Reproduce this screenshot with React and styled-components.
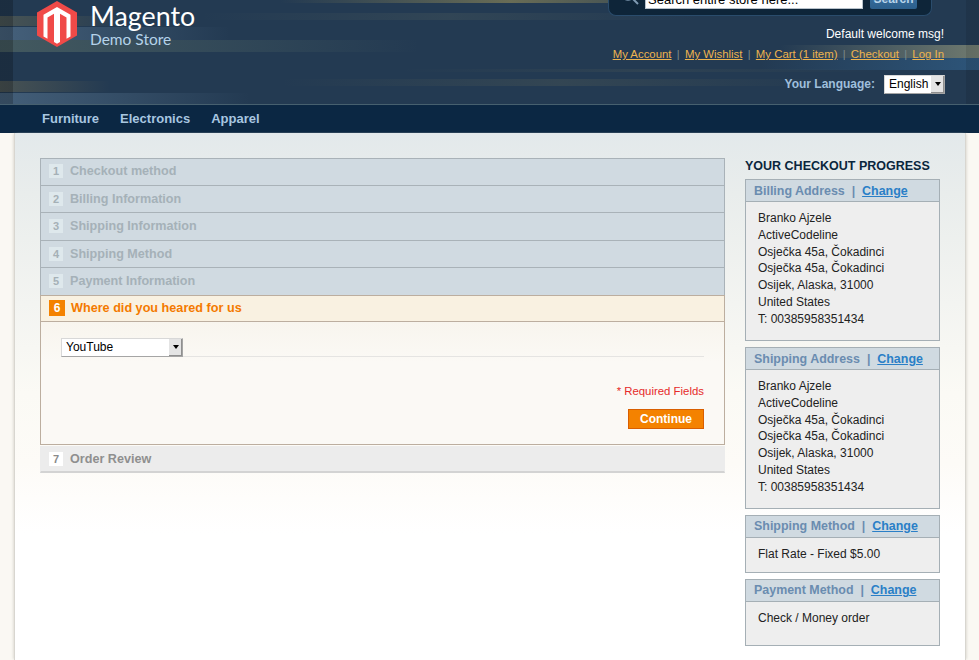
import styled, { createGlobalStyle } from "styled-components";

const GlobalStyle = createGlobalStyle`
  html, body {
    margin: 0;
    padding: 0;
    background: #faf8f3;
    font-family: "Liberation Sans", Arial, sans-serif;
    font-size: 12px;
    color: #222;
    overflow: hidden;
  }
`;

// one streak of the header texture: [colour, x, y, width, height, fade]
const streaks = [
  ["rgba(0,0,0,.22)", 0, 0, 13, 104, "flat"],
  ["rgba(0,0,0,.1)", 966, 0, 13, 104, "flat"],
  ["rgba(160,145,90,.3)", 0, 16, 130, 10, "out"],
  ["rgba(130,165,195,.36)", 0, 27, 230, 13, "out"],
  ["rgba(150,170,130,.28)", 0, 40, 420, 12, "out"],
  ["rgba(160,140,85,.3)", 0, 81, 110, 11, "out"],
  ["rgba(130,165,195,.34)", 0, 93, 250, 11, "out"],
  ["rgba(190,170,90,.45)", 280, 0, 460, 3, "both"],
  ["rgba(150,150,110,.12)", 200, 13, 500, 7, "both"],
  ["rgba(150,140,90,.14)", 280, 79, 560, 7, "both"],
  ["rgba(150,140,90,.1)", 400, 69, 480, 3, "both"],
  ["rgba(175,175,135,.55)", 780, 45, 199, 13, "in"],
  ["rgba(60,125,180,.4)", 760, 58, 219, 12, "in"],
];

const fades = {
  flat: (c) => `linear-gradient(${c}, ${c})`,
  out: (c) => `linear-gradient(to right, ${c}, transparent)`,
  in: (c) => `linear-gradient(to left, ${c}, transparent)`,
  both: (c) => `linear-gradient(to right, transparent, ${c} 50%, transparent)`,
};

const streakLayers = streaks
  .map(([colour, x, y, w, h, fade]) => `${fades[fade](colour)} ${x}px ${y}px / ${w}px ${h}px no-repeat`)
  .join(", ");

const Page = styled.div`
  width: 979px;
  height: 660px;
  overflow: hidden;
`;

const Header = styled.header`
  height: 105px;
  box-sizing: border-box;
  background: ${streakLayers}, #233a52;
  overflow: hidden;
  display: flex;
  justify-content: space-between;
  border-bottom: 1px solid #47606f;
`;

const Brand = styled.div`
  display: flex;
  align-items: flex-start;
  padding: 1px 0 0 37px;
  gap: 13px;
`;

const BrandText = styled.div`
  font-family: Lato, sans-serif;
  display: flex;
  flex-direction: column;
`;

const BrandName = styled.span`
  font-size: 26.8px;
  line-height: 30px;
  color: #fff;
`;

const BrandSub = styled.span`
  font-size: 15.5px;
  line-height: 17px;
  color: #b5d3ea;
`;

const HeaderRight = styled.div`
  padding-right: 35px;
  display: flex;
  flex-direction: column;
  align-items: flex-end;
`;

const SearchBar = styled.form`
  width: 324px;
  height: 34px;
  margin: -18px 12px 0 0;
  box-sizing: border-box;
  background: #0e2539;
  border: 1px solid #2a4c6c;
  border-top: 0;
  border-radius: 0 0 8px 8px;
  display: flex;
  align-items: flex-end;
  padding: 0 0 6px 11px;
  flex-shrink: 0;
`;

const SearchInput = styled.div`
  width: 218px;
  height: 22px;
  margin-left: 5px;
  background: #fff;
  border: 1px solid #b9c3cc;
  box-sizing: border-box;
  color: #000;
  font-size: 13px;
  line-height: 18px;
  padding: 3px 0 0 2px;
  white-space: nowrap;
  overflow: hidden;
`;

const SearchButton = styled.div`
  width: 47px;
  height: 22px;
  margin-left: 7px;
  border-radius: 2px;
  box-sizing: border-box;
  padding-top: 3px;
  background: linear-gradient(180deg, #3f78a8, #2c5f8c);
  color: #b8d4ea;
  font-weight: bold;
  font-size: 12px;
  line-height: 18px;
  text-align: center;
`;

const Welcome = styled.p`
  margin: 11px 0 0;
  color: #fff;
  font-size: 12px;
  line-height: 15px;
`;

const Links = styled.ul`
  list-style: none;
  display: flex;
  margin: 5px 0 0;
  padding: 0;
  line-height: 15px;
`;

const LinkItem = styled.li`
  color: #7d8a8c;
  font-size: 11px;

  & + &::before {
    content: "|";
    margin: 0 5.25px;
  }
`;

const TopLink = styled.a`
  color: #edb44f;
  font-size: 11.4px;
  text-decoration: underline;
`;

const Language = styled.div`
  display: flex;
  align-items: center;
  margin: 13px -1px 0 0;
  gap: 9px;
`;

const LanguageLabel = styled.span`
  color: #9fbfdc;
  font-weight: bold;
  font-size: 12px;
  margin-top: -2px;
`;

const Select = styled.div`
  width: ${(p) => p.$width}px;
  height: 19px;
  box-sizing: border-box;
  background: #fff;
  border: 1px solid #a5a5a5;
  border-top-color: #d8d8d8;
  border-left-color: #d8d8d8;
  color: #000;
  font-size: 12px;
  line-height: 17px;
  padding-left: 4px;
  position: relative;

  &::after {
    content: "";
    position: absolute;
    right: 0;
    top: 0;
    bottom: 0;
    width: 13px;
    background: #e4e4e4;
    border-right: 1px solid #8f8f8f;
    border-bottom: 1px solid #8f8f8f;
    box-sizing: border-box;
  }

  &::before {
    content: "";
    position: absolute;
    z-index: 1;
    right: 3px;
    top: 6px;
    border-left: 3.5px solid transparent;
    border-right: 3.5px solid transparent;
    border-top: 4px solid #000;
  }
`;

const Nav = styled.nav`
  height: 28px;
  box-sizing: border-box;
  padding: 0 0 2px 42px;
  background: #0b2743;
  display: flex;
  align-items: center;
  gap: 21px;
`;

const NavItem = styled.a`
  color: #a8c6e0;
  font-weight: bold;
  font-size: 13px;
`;

const Body = styled.div`
  height: 527px;
  margin: 0 13px 0 14px;
  box-sizing: border-box;
  border-left: 1px solid #d8d6d0;
  border-right: 1px solid #d8d6d0;
  box-shadow: -2px 0 2px -1px #e0ddd6, 2px 0 2px -1px #e0ddd6;
  background: linear-gradient(180deg, #e3e9eb 0, #e9edec 60px, #f3f4f1 170px, #fbfaf5 260px, #fdfbf7 330px, #ffffff 400px);
  padding: 25px 25px 0;
  display: flex;
  align-items: flex-start;
  gap: 20px;
`;

const Steps = styled.div`
  width: 685px;
`;

const Step = styled.div`
  height: ${(p) => p.$height}px;
  box-sizing: border-box;
  background: ${(p) => (p.$last ? "#ececec" : "#d0dae1")};
  border: 1px solid ${(p) => (p.$last ? "#ececec" : "#a9b2b8")};
  border-bottom: ${(p) => (p.$last ? "2px solid #d3d3d3" : "0")};
  display: flex;
  align-items: center;
  padding: 0 0 ${(p) => p.$lift}px 8px;
  gap: 7px;
`;

const StepNumber = styled.span`
  width: 14px;
  height: 14px;
  background: ${(p) => (p.$last ? "#fff" : "#dee8ec")};
  color: ${(p) => (p.$last ? "#8a8a8a" : "#a5b0b6")};
  font-weight: bold;
  font-size: 11px;
  line-height: 14px;
  text-align: center;
`;

const StepTitle = styled.span`
  color: ${(p) => (p.$last ? "#8f8f8f" : "#a5b1b8")};
  font-weight: bold;
  font-size: 12.6px;
`;

const ActiveHead = styled.div`
  height: 27px;
  box-sizing: border-box;
  background: #f9f1e1;
  border: 1px solid #bcae9f;
  display: flex;
  align-items: center;
  padding: 0 0 1px 8px;
  gap: 6px;
`;

const ActiveNumber = styled.span`
  width: 16px;
  height: 16px;
  background: #f48200;
  color: #fff;
  font-weight: bold;
  font-size: 12px;
  line-height: 16px;
  text-align: center;
`;

const ActiveTitle = styled.span`
  color: #f47a00;
  font-weight: bold;
  font-size: 12.65px;
`;

const ActiveBody = styled.div`
  height: 123px;
  box-sizing: border-box;
  border: 1px solid #bcae9f;
  border-top: 0;
  background: linear-gradient(180deg, #f8f5ee 0, #fbf9f5 40px);
  padding: 16px 20px 0;
  display: flex;
  flex-direction: column;
  margin-bottom: 1px;
`;

const FieldRow = styled.div`
  border-bottom: 1px solid #e5e4e2;
  height: 18px;
`;

const Required = styled.p`
  margin: 27px 0 0;
  text-align: right;
  color: #e62a2a;
  font-size: 11.4px;
  line-height: 14px;
`;

const ButtonRow = styled.div`
  display: flex;
  justify-content: flex-end;
  margin-top: 11px;
`;

const Continue = styled.button`
  width: 76px;
  height: 20px;
  padding: 0;
  background: #f48200;
  border: 1px solid #d95e00;
  color: #fff;
  font: bold 12px "Liberation Sans", Arial, sans-serif;
`;

const Sidebar = styled.aside`
  width: 195px;
  flex-shrink: 0;
`;

const SidebarTitle = styled.h2`
  margin: 0;
  height: 21px;
  padding-top: 1px;
  box-sizing: border-box;
  font-size: 12.5px;
  line-height: 14px;
  font-weight: bold;
  color: #0a263d;
  text-transform: uppercase;
  white-space: nowrap;
`;

const Box = styled.section`
  border: 1px solid #a5afb5;
  background: #eeeeee;
  height: ${(p) => p.$height}px;
  box-sizing: border-box;
  margin-bottom: 6px;
`;

const BoxHead = styled.div`
  height: 22px;
  box-sizing: border-box;
  background: #d0dae1;
  border-bottom: 1px solid #a5afb5;
  padding-left: 8px;
  font-weight: bold;
  font-size: 12.45px;
  line-height: ${(p) => (p.$tight ? 20 : 22)}px;
  color: #6a8cb0;
  white-space: pre;
`;

const ChangeLink = styled.a`
  color: #2a7fc7;
  text-decoration: underline;
`;

const Address = styled.div`
  padding: 8px 12px 0;
  font-size: 12px;
  line-height: 16.8px;
  color: #222;
`;

const steps = [
  { title: "Checkout method", height: 27, lift: 2 },
  { title: "Billing Information", height: 27, lift: 0 },
  { title: "Shipping Information", height: 28, lift: 2 },
  { title: "Shipping Method", height: 27, lift: 0 },
  { title: "Payment Information", height: 28, lift: 2 },
];
const address = ["Branko Ajzele", "ActiveCodeline", "Osječka 45a, Čokadinci", "Osječka 45a, Čokadinci", "Osijek, Alaska, 31000", "United States", "T: 00385958351434"];
const links = ["My Account", "My Wishlist", "My Cart (1 item)", "Checkout", "Log In"];

function Logo() {
  return (
    <svg width="40" height="46" viewBox="0 0 40 46">
      <path d="M20 0 40 11.5v23L20 46 0 34.5v-23z" fill="#f04a48" />
      <path d="M20 6 33.5 13.8V35.5L29.5 37.8V16.5L23 12.8V41L20 42.8 17 41V12.8L10.5 16.5V37.8L6.5 35.5V13.8z" fill="#fff" />
    </svg>
  );
}

function SearchIcon() {
  return (
    <svg width="20" height="20" viewBox="0 0 20 20" fill="none" stroke="#7f9bb3" strokeWidth="1.6">
      <circle cx="8" cy="5" r="6" />
      <path d="M12.5 9.5 18 15" strokeWidth="2" />
    </svg>
  );
}

function SummaryBox({ title, height, tight, children }) {
  return (
    <Box $height={height}>
      <BoxHead $tight={tight}>
        {title}  |  <ChangeLink>Change</ChangeLink>
      </BoxHead>
      <Address>{children}</Address>
    </Box>
  );
}

function AddressLines() {
  return address.map((line, index) => <div key={index}>{line}</div>);
}

export default function App() {
  return (
    <Page>
      <GlobalStyle />
      <Header>
        <Brand>
          <Logo />
          <BrandText>
            <BrandName>Magento</BrandName>
            <BrandSub>Demo Store</BrandSub>
          </BrandText>
        </Brand>
        <HeaderRight>
          <SearchBar>
            <SearchIcon />
            <SearchInput>Search entire store here...</SearchInput>
            <SearchButton>Search</SearchButton>
          </SearchBar>
          <Welcome>Default welcome msg!</Welcome>
          <Links>
            {links.map((link) => (
              <LinkItem key={link}>
                <TopLink>{link}</TopLink>
              </LinkItem>
            ))}
          </Links>
          <Language>
            <LanguageLabel>Your Language:</LanguageLabel>
            <Select $width={61}>English</Select>
          </Language>
        </HeaderRight>
      </Header>
      <Nav>
        <NavItem>Furniture</NavItem>
        <NavItem>Electronics</NavItem>
        <NavItem>Apparel</NavItem>
      </Nav>
      <Body>
        <Steps>
          {steps.map((step, index) => (
            <Step key={step.title} $height={step.height} $lift={step.lift}>
              <StepNumber>{index + 1}</StepNumber>
              <StepTitle>{step.title}</StepTitle>
            </Step>
          ))}
          <ActiveHead>
            <ActiveNumber>6</ActiveNumber>
            <ActiveTitle>Where did you heared for us</ActiveTitle>
          </ActiveHead>
          <ActiveBody>
            <FieldRow>
              <Select $width={122}>YouTube</Select>
            </FieldRow>
            <Required>* Required Fields</Required>
            <ButtonRow>
              <Continue>Continue</Continue>
            </ButtonRow>
          </ActiveBody>
          <Step $last $height={27} $lift={0}>
            <StepNumber $last>7</StepNumber>
            <StepTitle $last>Order Review</StepTitle>
          </Step>
        </Steps>
        <Sidebar>
          <SidebarTitle>Your Checkout Progress</SidebarTitle>
          <SummaryBox title="Billing Address" height={162}><AddressLines /></SummaryBox>
          <SummaryBox title="Shipping Address" height={162}><AddressLines /></SummaryBox>
          <SummaryBox title="Shipping Method" height={58} tight>Flat Rate - Fixed $5.00</SummaryBox>
          <SummaryBox title="Payment Method" height={67} tight>Check / Money order</SummaryBox>
        </Sidebar>
      </Body>
    </Page>
  );
}
